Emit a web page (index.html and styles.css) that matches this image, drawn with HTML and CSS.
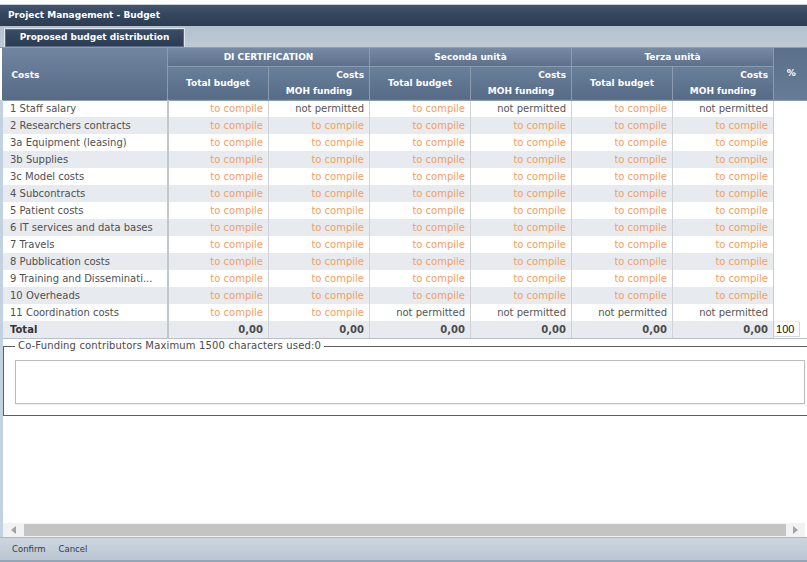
FILE: index.html
```html
<!DOCTYPE html>
<html>
<head>
<meta charset="utf-8">
<title>Project Management - Budget</title>
<link rel="stylesheet" href="styles.css">
</head>
<body>
<div class="window">
  <div class="topstrip"></div>
  <div class="titlebar">Project Management - Budget</div>
  <div class="tabstrip"><div class="tab">Proposed budget distribution</div></div>
  <table class="grid">
    <colgroup>
      <col class="c-costs"><col class="c-val"><col class="c-val"><col class="c-val"><col class="c-val"><col class="c-val"><col class="c-val"><col class="c-pct">
    </colgroup>
    <thead>
      <tr class="h1">
        <th rowspan="2" class="th-costs">Costs</th>
        <th colspan="2">DI CERTIFICATION</th>
        <th colspan="2">Seconda unità</th>
        <th colspan="2">Terza unità</th>
        <th rowspan="2" class="th-pct">%</th>
      </tr>
      <tr class="h2">
        <th>Total budget</th>
        <th class="th-moh"><div class="moh-top">Costs</div><div class="moh-bot">MOH funding</div></th>
        <th>Total budget</th>
        <th class="th-moh"><div class="moh-top">Costs</div><div class="moh-bot">MOH funding</div></th>
        <th>Total budget</th>
        <th class="th-moh"><div class="moh-top">Costs</div><div class="moh-bot">MOH funding</div></th>
      </tr>
    </thead>
    <tbody>
      <tr><td class="name">1 Staff salary</td><td class="tc">to compile</td><td class="np">not permitted</td><td class="tc">to compile</td><td class="np">not permitted</td><td class="tc">to compile</td><td class="np">not permitted</td><td class="pct"></td></tr>
      <tr class="alt"><td class="name">2 Researchers contracts</td><td class="tc">to compile</td><td class="tc">to compile</td><td class="tc">to compile</td><td class="tc">to compile</td><td class="tc">to compile</td><td class="tc">to compile</td><td class="pct"></td></tr>
      <tr><td class="name">3a Equipment (leasing)</td><td class="tc">to compile</td><td class="tc">to compile</td><td class="tc">to compile</td><td class="tc">to compile</td><td class="tc">to compile</td><td class="tc">to compile</td><td class="pct"></td></tr>
      <tr class="alt"><td class="name">3b Supplies</td><td class="tc">to compile</td><td class="tc">to compile</td><td class="tc">to compile</td><td class="tc">to compile</td><td class="tc">to compile</td><td class="tc">to compile</td><td class="pct"></td></tr>
      <tr><td class="name">3c Model costs</td><td class="tc">to compile</td><td class="tc">to compile</td><td class="tc">to compile</td><td class="tc">to compile</td><td class="tc">to compile</td><td class="tc">to compile</td><td class="pct"></td></tr>
      <tr class="alt"><td class="name">4 Subcontracts</td><td class="tc">to compile</td><td class="tc">to compile</td><td class="tc">to compile</td><td class="tc">to compile</td><td class="tc">to compile</td><td class="tc">to compile</td><td class="pct"></td></tr>
      <tr><td class="name">5 Patient costs</td><td class="tc">to compile</td><td class="tc">to compile</td><td class="tc">to compile</td><td class="tc">to compile</td><td class="tc">to compile</td><td class="tc">to compile</td><td class="pct"></td></tr>
      <tr class="alt"><td class="name">6 IT services and data bases</td><td class="tc">to compile</td><td class="tc">to compile</td><td class="tc">to compile</td><td class="tc">to compile</td><td class="tc">to compile</td><td class="tc">to compile</td><td class="pct"></td></tr>
      <tr><td class="name">7 Travels</td><td class="tc">to compile</td><td class="tc">to compile</td><td class="tc">to compile</td><td class="tc">to compile</td><td class="tc">to compile</td><td class="tc">to compile</td><td class="pct"></td></tr>
      <tr class="alt"><td class="name">8 Pubblication costs</td><td class="tc">to compile</td><td class="tc">to compile</td><td class="tc">to compile</td><td class="tc">to compile</td><td class="tc">to compile</td><td class="tc">to compile</td><td class="pct"></td></tr>
      <tr><td class="name">9 Training and Disseminati...</td><td class="tc">to compile</td><td class="tc">to compile</td><td class="tc">to compile</td><td class="tc">to compile</td><td class="tc">to compile</td><td class="tc">to compile</td><td class="pct"></td></tr>
      <tr class="alt"><td class="name">10 Overheads</td><td class="tc">to compile</td><td class="tc">to compile</td><td class="tc">to compile</td><td class="tc">to compile</td><td class="tc">to compile</td><td class="tc">to compile</td><td class="pct"></td></tr>
      <tr><td class="name">11 Coordination costs</td><td class="tc">to compile</td><td class="tc">to compile</td><td class="np">not permitted</td><td class="np">not permitted</td><td class="np">not permitted</td><td class="np">not permitted</td><td class="pct"></td></tr>
      <tr class="total"><td class="name">Total</td><td>0,00</td><td>0,00</td><td>0,00</td><td>0,00</td><td>0,00</td><td>0,00</td><td class="pct"><span class="pctbox">100</span></td></tr>
    </tbody>
  </table>
  <div class="lower">
    <fieldset class="cofund">
      <legend>Co-Funding contributors Maximum 1500 characters used:0</legend>
      <textarea class="notes"></textarea>
    </fieldset>
    <div class="spacer"></div>
    <div class="hscroll">
      <div class="sbtn"><span class="arr-l"></span></div>
      <div class="track"></div>
      <div class="sbtn sbtn-r"><span class="arr-r"></span></div>
    </div>
  </div>
  <div class="footer"><span class="fbtn">Confirm</span><span class="fbtn">Cancel</span></div>
</div>
</body>
</html>
```

FILE: styles.css
```css
* { box-sizing: border-box; }
html, body { margin: 0; padding: 0; background: #fff; }
body { font-family: "DejaVu Sans", Verdana, sans-serif; font-size: 10px; color: #4a4a4a; }

.window { width: 807px; height: 562px; display: flex; flex-direction: column; overflow: hidden; background: #fff; }

.topstrip { height: 5px; flex: none; background: #fff; border-bottom: 1px solid #c9d1da; }

.titlebar {
  height: 21px; flex: none;
  background: linear-gradient(#42556d, #34465d 45%, #2c3d53);
  color: #fff; font-weight: bold; font-size: 9px;
  padding-left: 8px; line-height: 20px;
}

.tabstrip {
  height: 22px; flex: none;
  background: linear-gradient(#b3c0ce, #bfcad6);
  padding: 2px 0 0 4px;
  border-bottom: 1px solid #8e9db0;
}
.tab {
  width: 181px; height: 19px;
  background: linear-gradient(#3a4d66, #2a3b52);
  border: 1px solid #dfe6ee; border-bottom: none;
  box-shadow: inset 0 0 0 1px #5b6e86;
  color: #fff; font-weight: bold; font-size: 9px;
  text-align: center; line-height: 17px;
}

.grid { border-collapse: collapse; table-layout: fixed; width: 807px; flex: none; }
.c-costs { width: 166px; }
.c-val { width: 101px; }
.c-pct { width: 35px; }

.grid th {
  background: linear-gradient(#768aa3, #5b708b);
  color: #fff; font-weight: bold; font-size: 9px;
  border: 1px solid #8b9cb1; border-top: none;
  padding: 0; text-align: center;
}
.grid .h1 th { height: 18px; }
.grid .h2 th { height: 33px; background: linear-gradient(#6a7f99, #566b86); }
.grid .th-costs { text-align: left; padding-left: 10px; vertical-align: middle; background: linear-gradient(#7185a0, #566b86); border-left: none; padding-top: 2px; }
.grid .th-pct { background: linear-gradient(#5b6f89, #667b95); border-right: none; vertical-align: top; padding-top: 20px; }
.grid .h2 .th-moh { padding: 0 5px; }
.moh-top { text-align: right; height: 16px; line-height: 17px; }
.moh-bot { text-align: center; height: 17px; line-height: 16px; }

.grid td {
  height: 17px; padding: 0 5px; text-align: right; white-space: nowrap; overflow: hidden;
  border-left: 1px solid #cfd3d8; line-height: 16px;
}
.grid td.name { text-align: left; padding-left: 7px; border-left: 3px solid #c3d2e1; border-right: 2px solid #c2c7cc; color: #505050; }
.grid tr.alt td { background: #e7ebef; }
.grid td.tc { color: #f2a062; }
.grid td.np { color: #555; }
.grid td.pct { background: #fff !important; border-left: 1px solid #c9cdd2; }
.grid tr.total td { background: #e7ebef; font-weight: bold; color: #4a4a4a; border-bottom: 1px solid #b9bfc6; }
.grid tr.total td.name { color: #333; }
.grid tr.total td.pct { padding: 0; text-align: left; }
.pctbox {
  display: inline-block; width: 26px; height: 16px; background: #fff;
  border: 1px solid #d4d8dc; border-top-color: #eef0f2; border-left-color: #eef0f2;
  font-family: "Liberation Sans", Arial, sans-serif; font-weight: normal; font-size: 11px;
  color: #111; line-height: 15px; padding-left: 1px;
}

.lower { flex: 1; display: flex; flex-direction: column; border-left: 3px solid #c3d2e1; }

.cofund {
  margin: 1px 0 0 0; padding: 0 2px 11px 11px;
  border: 1px solid #5e5e5e; border-right: none;
  min-width: 0; flex: none;
}
.cofund legend {
  padding: 0 3px; font-size: 10px; color: #4a4a4a; line-height: 12px; letter-spacing: 0.15px;
}
.notes {
  display: block; width: 790px; height: 44px; margin: 8px 0 0 0;
  border: 1px solid #bcbcbc; resize: none; background: #fff;
  box-shadow: 0 1px 2px rgba(0,0,0,0.08);
}

.spacer { flex: 1; }

.hscroll { height: 14px; flex: none; display: flex; background: #f1f2f3; margin-right: 2px; align-items: stretch; padding: 1px 0; }
.sbtn { width: 21px; display: flex; align-items: center; justify-content: center; }
.sbtn-r { width: 19px; }
.track { flex: 1; background: #c4c4c4; }
.arr-l { width: 0; height: 0; border-top: 4px solid transparent; border-bottom: 4px solid transparent; border-right: 5px solid #a3a3a3; }
.arr-r { width: 0; height: 0; border-top: 4px solid transparent; border-bottom: 4px solid transparent; border-left: 5px solid #a3a3a3; }

.footer {
  height: 25px; flex: none;
  background: linear-gradient(#cdd6df, #bac6d2);
  border-top: 1px solid #a9b6c4; border-bottom: 2px solid #97a6b7;
  display: flex; align-items: center; gap: 13px; padding-left: 12px;
  font-size: 8.5px; color: #3a3a3a;
}
```
